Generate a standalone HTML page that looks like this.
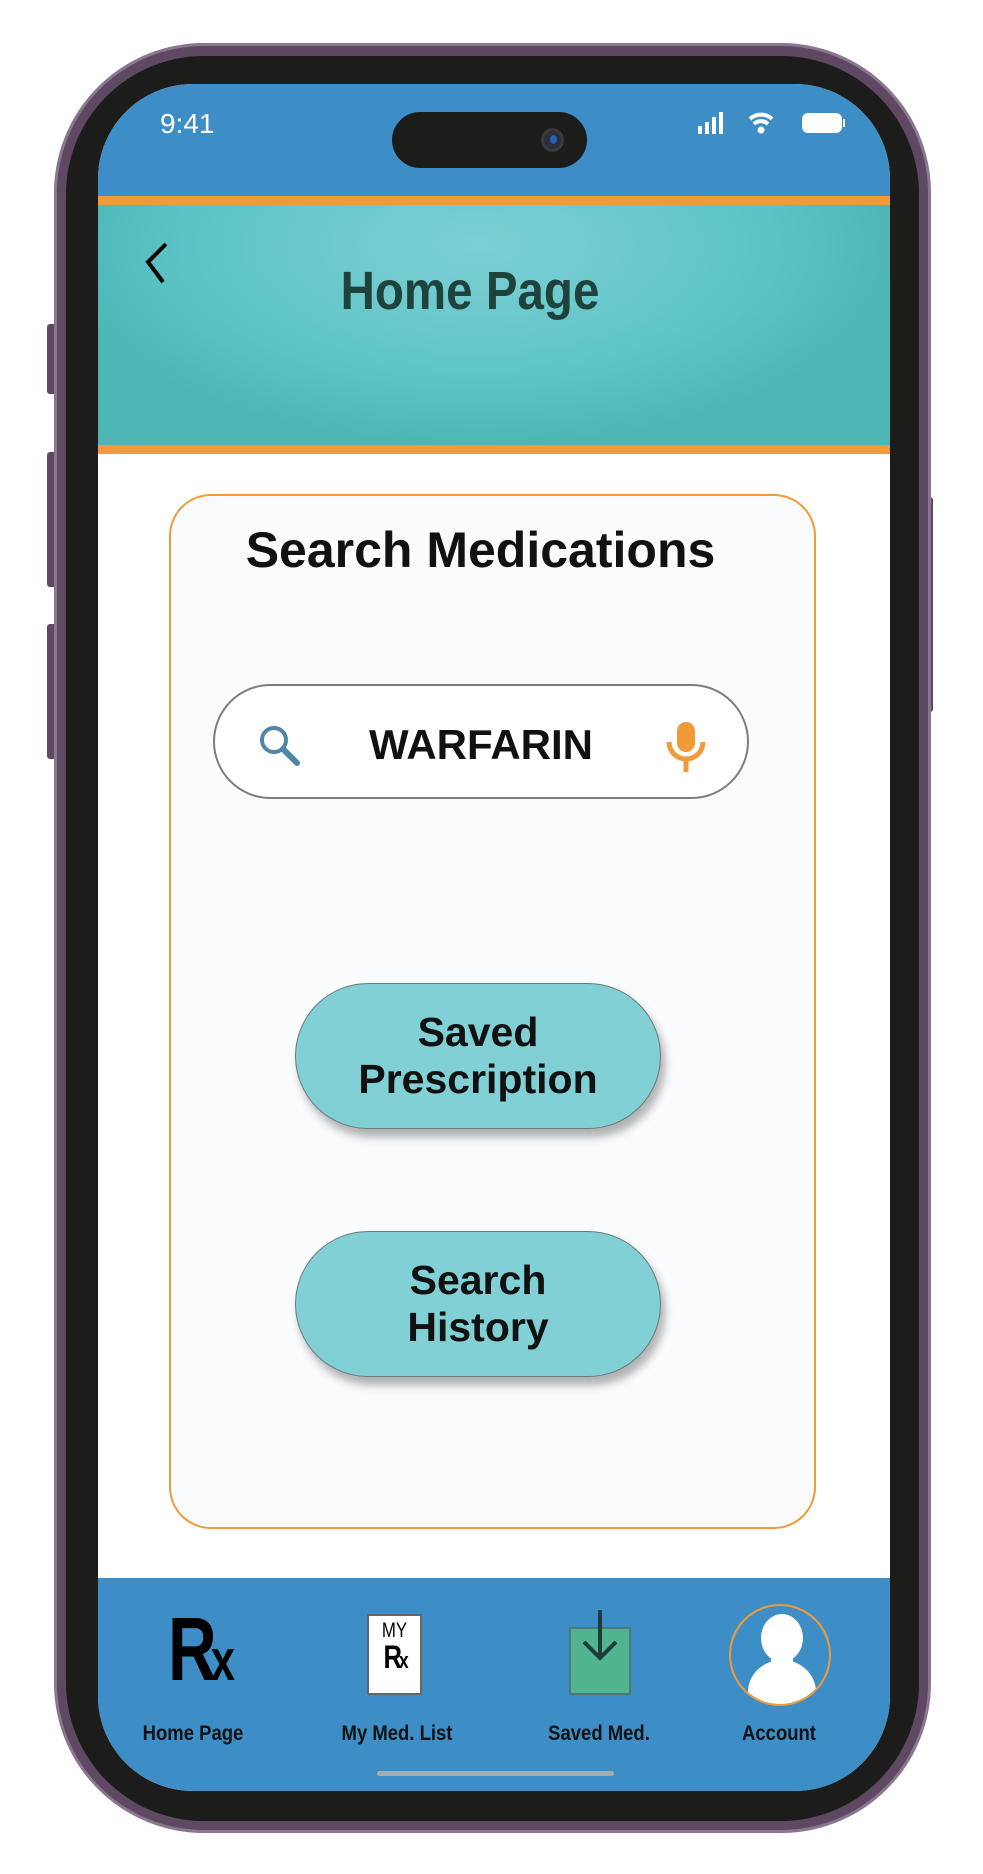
<!DOCTYPE html>
<html><head><meta charset="utf-8"><style>
*{margin:0;padding:0;box-sizing:border-box}
body{width:983px;height:1874px;background:#fff;position:relative;overflow:hidden;font-family:"Liberation Sans",sans-serif}
.abs{position:absolute}
.phone{left:54px;top:43px;width:877px;height:1790px;border-radius:150px;background:#5e4862;border:3px solid #8a7690}
.bezel{left:66px;top:56px;width:853px;height:1765px;border-radius:138px;background:#1c1c1b}
.screen{left:98px;top:84px;width:792px;height:1707px;border-radius:95px;overflow:hidden;background:#fff}
.btn{background:#5e4862;border-radius:3px}
.pill{position:absolute;border-radius:75px;background:#80d0d6;border:1.5px solid #6d7a7b;box-shadow:4px 8px 9px rgba(0,0,0,.3);text-align:center;font-size:41px;line-height:47px;color:#111;display:flex;align-items:center;justify-content:center;font-weight:bold}
.lab{position:absolute;top:1722px;font-size:21px;color:#111;transform:translateX(-50%) scaleX(0.88);white-space:nowrap;font-weight:bold}
</style></head><body>
<div class="abs btn" style="left:47px;top:324px;width:10px;height:70px"></div>
<div class="abs btn" style="left:47px;top:452px;width:10px;height:135px"></div>
<div class="abs btn" style="left:47px;top:624px;width:10px;height:135px"></div>
<div class="abs btn" style="left:924px;top:497px;width:9px;height:215px"></div>
<div class="abs phone"></div>
<div class="abs bezel"></div>
<div class="abs screen">
  <div class="abs" style="left:0;top:0;width:792px;height:112px;background:#3d8ec6"></div>
  <div class="abs" style="left:0;top:112px;width:792px;height:9px;background:#f09a3a"></div>
  <div class="abs" style="left:0;top:121px;width:792px;height:240px;background:radial-gradient(ellipse 420px 200px at 380px 40px,#7dcfd4,#5cc4c6 70%,#4fb5b5)"></div>
  <div class="abs" style="left:0;top:361px;width:792px;height:9px;background:#f09a3a"></div>
  <div class="abs" style="left:0;top:1494px;width:792px;height:213px;background:#3d8ec6"></div>
</div>
<div class="abs" style="left:160px;top:108px;font-size:28px;color:#fff">9:41</div>
<div class="abs" style="left:392px;top:112px;width:195px;height:56px;border-radius:28px;background:#1c1c1b"></div>
<div class="abs" style="left:541px;top:128px;width:23px;height:24px;border-radius:50%;background:#2a2f3a;border:3px solid #3a3a3a"><div style="margin:4px 0 0 6px;width:7px;height:9px;border-radius:50%;background:#2a5fb5"></div></div>
<svg class="abs" style="left:696px;top:110px" width="150" height="26" viewBox="0 0 150 26">
<rect x="2" y="16" width="4" height="8" fill="#fff"/><rect x="9" y="12" width="4" height="12" fill="#fff"/><rect x="16" y="7" width="4" height="17" fill="#fff"/><rect x="23" y="2" width="4" height="22" fill="#fff"/>
<path d="M54 9a16 16 0 0 1 22 0M58 14a10 10 0 0 1 14 0" stroke="#fff" stroke-width="4" fill="none"/><circle cx="65" cy="20" r="3.5" fill="#fff"/>
<rect x="106" y="3" width="40" height="20" rx="6" fill="#fff"/><rect x="147" y="9" width="2" height="8" fill="#fff"/>
</svg>
<svg class="abs" style="left:140px;top:240px" width="34" height="46"><path d="M26 4 L8 22 L23 42" stroke="#000" stroke-width="4" fill="none"/></svg>
<div class="abs" style="left:270px;top:260px;width:400px;text-align:center;font-weight:bold;font-size:54px;color:#1f423d;transform:scaleX(0.88)">Home Page</div>
<div class="abs" style="left:169px;top:494px;width:647px;height:1035px;border:2.5px solid #f09a3a;border-radius:42px;background:#f9fbfd"></div>
<div class="abs" style="left:169px;top:521px;width:623px;text-align:center;font-size:50px;color:#111;font-weight:bold">Search Medications</div>
<div class="abs" style="left:213px;top:684px;width:536px;height:115px;border-radius:58px;border:2px solid #7d7d7d;background:#fff"></div>
<svg class="abs" style="left:256px;top:722px" width="52" height="50"><circle cx="18" cy="18" r="12" stroke="#4f86a8" stroke-width="4" fill="none"/><path d="M27 27 L41 41" stroke="#4f86a8" stroke-width="6" stroke-linecap="round"/></svg>
<div class="abs" style="left:350px;top:721px;width:262px;text-align:center;font-size:42px;color:#111;font-weight:bold">WARFARIN</div>
<svg class="abs" style="left:664px;top:720px" width="44" height="54"><rect x="13" y="2" width="18" height="30" rx="9" fill="#f09a3a"/><path d="M5 22 a17 17 0 0 0 34 0" stroke="#f09a3a" stroke-width="5" fill="none"/><rect x="19.5" y="38" width="5" height="14" fill="#f09a3a"/></svg>
<div class="pill" style="left:295px;top:983px;width:366px;height:146px">Saved<br>Prescription</div>
<div class="pill" style="left:295px;top:1231px;width:366px;height:146px">Search<br>History</div>
<div class="abs" style="left:168px;top:1605px;font-size:90px;font-weight:bold;color:#000;letter-spacing:-8px;line-height:1;transform:scaleX(0.75);transform-origin:left">R<span style="font-size:58px">x</span></div>
<div class="abs" style="left:367px;top:1614px;width:55px;height:81px;background:#fff;border:2px solid #666;text-align:center;line-height:1">
<div style="font-size:21px;margin-top:4px;transform:scaleX(0.8)">MY</div><div style="font-size:32px;font-weight:bold;letter-spacing:-4px;transform:scaleX(0.8)">R<span style="font-size:22px">x</span></div></div>
<div class="abs" style="left:569px;top:1627px;width:62px;height:68px;background:#50b58f;border:2px solid #4d7a70"></div>
<svg class="abs" style="left:570px;top:1608px" width="60" height="62"><path d="M30 2 V50 M14 34 L30 50 L46 34" stroke="#1e3d3a" stroke-width="4" fill="none"/></svg>
<div class="abs" style="left:729px;top:1604px;width:102px;height:102px;border-radius:50%;border:2px solid #f09a3a;overflow:hidden">
<svg width="102" height="102"><ellipse cx="51" cy="32" rx="21" ry="24" fill="#fff"/><ellipse cx="51" cy="86" rx="34" ry="32" fill="#fff"/><rect x="40" y="45" width="22" height="20" fill="#fff"/></svg></div>
<div class="lab" style="left:193px">Home Page</div>
<div class="lab" style="left:397px">My Med. List</div>
<div class="lab" style="left:599px">Saved Med.</div>
<div class="lab" style="left:779px">Account</div>
<div class="abs" style="left:377px;top:1771px;width:237px;height:5px;border-radius:3px;background:#aaa"></div>
</body></html>
